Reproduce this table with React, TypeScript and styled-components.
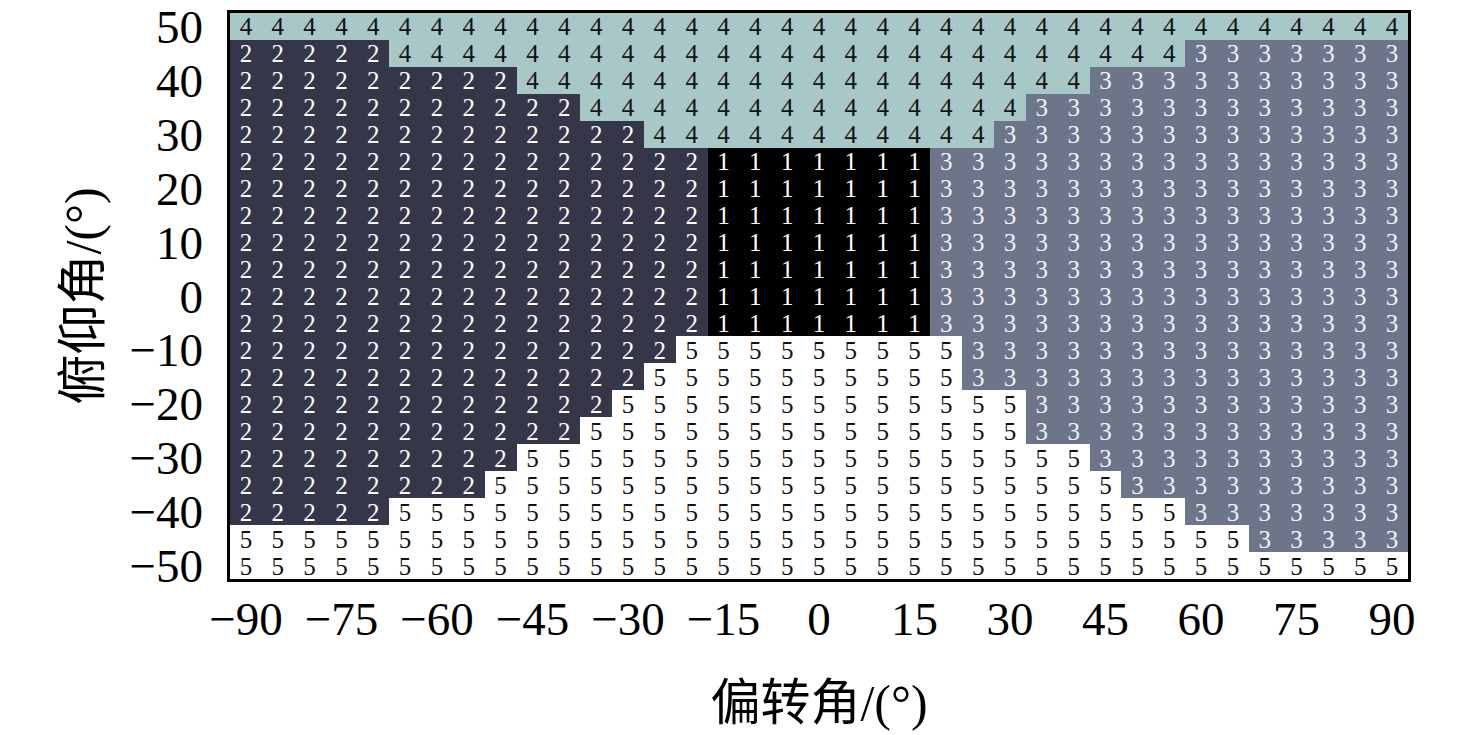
import styled, { createGlobalStyle } from "styled-components";

type Level = 1 | 2 | 3 | 4 | 5;

// each row is a list of [level, run length]; 37 yaw columns (-90..90 step 5)
const ROWS: [Level, number][][] = [
  [[4, 37]],
  [[2, 5], [4, 25], [3, 7]],
  [[2, 9], [4, 18], [3, 10]],
  [[2, 11], [4, 14], [3, 12]],
  [[2, 13], [4, 11], [3, 13]],
  [[2, 15], [1, 7], [3, 15]],
  [[2, 15], [1, 7], [3, 15]],
  [[2, 15], [1, 7], [3, 15]],
  [[2, 15], [1, 7], [3, 15]],
  [[2, 15], [1, 7], [3, 15]],
  [[2, 15], [1, 7], [3, 15]],
  [[2, 15], [1, 7], [3, 15]],
  [[2, 14], [5, 9], [3, 14]],
  [[2, 13], [5, 10], [3, 14]],
  [[2, 12], [5, 13], [3, 12]],
  [[2, 11], [5, 14], [3, 12]],
  [[2, 9], [5, 18], [3, 10]],
  [[2, 8], [5, 20], [3, 9]],
  [[2, 5], [5, 25], [3, 7]],
  [[5, 32], [3, 5]],
  [[5, 37]],
];

const FILL: Record<Level, string> = {
  1: "#000000",
  2: "#36364a",
  3: "#6c758a",
  4: "#a7c8c7",
  5: "#ffffff",
};

const INK: Record<Level, string> = {
  1: "#ffffff",
  2: "#ffffff",
  3: "#f2f3f7",
  4: "#111111",
  5: "#111111",
};

const grid: Level[][] = ROWS.map((runs) =>
  runs.flatMap(([v, n]) => Array.from({ length: n }, () => v))
);

const pitchLabels = Array.from({ length: 21 }, (_, i) => {
  const v = 50 - i * 5;
  if (i % 2 !== 0) return "";
  return v < 0 ? `\u2212${-v}` : `${v}`;
});

const yawLabels = Array.from({ length: 37 }, (_, i) => {
  const v = -90 + i * 5;
  if (i % 3 !== 0) return "";
  return v < 0 ? `\u2212${-v}` : `${v}`;
});

const GlobalStyle = createGlobalStyle`
  html, body {
    margin: 0;
    background: #ffffff;
  }
  body {
    font-family: "Liberation Serif", "Noto Sans CJK SC", serif;
    color: #000;
  }
`;

const Figure = styled.div`
  width: 1476px;
  height: 735px;
  box-sizing: border-box;
  padding: 10px 0 0 40px;
  display: grid;
  grid-template-columns: 86px 101px 1184px;
  grid-template-rows: 572px auto auto;
  overflow: hidden;
`;

const YTitle = styled.div`
  grid-row: 1;
  grid-column: 1;
  display: flex;
  align-items: center;
  justify-content: center;
`;

const YTitleText = styled.span`
  flex-shrink: 0;
  white-space: nowrap;
  font-size: 50px;
  line-height: 1;
  transform: rotate(-90deg);
`;

const YTicks = styled.div`
  grid-row: 1;
  grid-column: 2;
  padding: 3px 24px 3px 0;
  display: grid;
  grid-template-rows: repeat(21, minmax(0, 1fr));
`;

const YTick = styled.div`
  display: flex;
  align-items: center;
  justify-content: flex-end;
  padding-top: 2px;
  font-size: 47px;
  line-height: 1;
  white-space: nowrap;
`;

const Plot = styled.div`
  grid-row: 1;
  grid-column: 3;
  box-sizing: border-box;
  border: 3px solid #000;
  display: grid;
  grid-template-columns: repeat(37, minmax(0, 1fr));
  grid-template-rows: repeat(21, minmax(0, 1fr));
`;

const Cell = styled.div<{ $v: Level }>`
  display: flex;
  align-items: center;
  justify-content: center;
  background: ${(p) => FILL[p.$v]};
  color: ${(p) => INK[p.$v]};
  font-size: 25px;
  line-height: 1;
  padding-top: 1px;
`;

const XTicks = styled.div`
  grid-row: 2;
  grid-column: 3;
  margin-top: 14px;
  padding: 0 3px;
  display: grid;
  grid-template-columns: repeat(37, minmax(0, 1fr));
`;

const XTick = styled.div`
  height: 47px;
  display: flex;
  justify-content: center;
  font-size: 47px;
  line-height: 1;
  white-space: nowrap;
`;

const XTitle = styled.div`
  grid-row: 3;
  grid-column: 3;
  margin-top: 28px;
  text-align: center;
  font-size: 50px;
  line-height: 1;
  white-space: nowrap;
`;

function App() {
  return (
    <>
      <GlobalStyle />
      <Figure>
        <YTitle>
          <YTitleText>俯仰角/(°)</YTitleText>
        </YTitle>
        <YTicks>
          {pitchLabels.map((t, i) => (
            <YTick key={i}>{t}</YTick>
          ))}
        </YTicks>
        <Plot>
          {grid.map((row, r) =>
            row.map((v, c) => (
              <Cell key={`${r}-${c}`} $v={v}>
                {v}
              </Cell>
            ))
          )}
        </Plot>
        <XTicks>
          {yawLabels.map((t, i) => (
            <XTick key={i}>{t}</XTick>
          ))}
        </XTicks>
        <XTitle>偏转角/(°)</XTitle>
      </Figure>
    </>
  );
}

export default App;
